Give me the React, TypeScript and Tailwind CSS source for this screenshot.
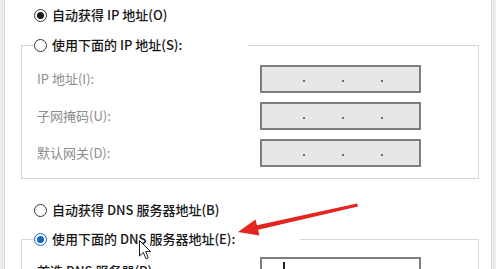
import React from "react";

type RadioProps = { checked?: boolean; blue?: boolean };

function Radio({ checked = false, blue = false }: RadioProps) {
  const ring = blue ? "border-[#1466c8]" : "border-[#333333]";
  const dot = blue ? "bg-[#1466c8]" : "bg-[#1a1a1a]";
  return (
    <span
      className={`flex h-[13px] w-[13px] shrink-0 items-center justify-center rounded-full border bg-white ${ring}`}
    >
      {checked && <span className={`h-[7px] w-[7px] rounded-full ${dot}`} />}
    </span>
  );
}

function RadioLabel({ text, checked, blue }: { text: string } & RadioProps) {
  return (
    <span className="flex h-[18px] items-center gap-[5px] text-[13px] font-medium leading-[18px] text-[#161616]">
      <Radio checked={checked} blue={blue} />
      <span className="whitespace-nowrap">{text}</span>
    </span>
  );
}

function IpField({ active = false, caret = false }: { active?: boolean; caret?: boolean }) {
  return (
    <div
      className={`relative flex h-[28px] w-[161px] items-center gap-[37px] border-2 border-[#7e7e7e] pl-[41px] ${
        active ? "bg-white" : "bg-[#e7e7e7]"
      }`}
    >
      {caret ? (
        <span className="absolute left-[21px] top-[3px] h-[20px] w-[2px] bg-[#222]" />
      ) : (
        <>
          <span className="mt-[4px] h-[2px] w-[2px] bg-[#6e6e6e]" />
          <span className="mt-[4px] h-[2px] w-[2px] bg-[#6e6e6e]" />
          <span className="mt-[4px] h-[2px] w-[2px] bg-[#6e6e6e]" />
        </>
      )}
    </div>
  );
}

function FieldRow({ label, disabled = true, active = false, caret = false }: {
  label: string;
  disabled?: boolean;
  active?: boolean;
  caret?: boolean;
}) {
  return (
    <div className="flex items-center">
      <span
        className={`w-[223px] whitespace-nowrap text-[13px] ${disabled ? "text-[#8d8d8d]" : "font-medium text-[#1b1b1b]"}`}
      >
        {label}
      </span>
      <IpField active={active} caret={caret} />
    </div>
  );
}

function RedArrow() {
  return (
    <svg className="pointer-events-none absolute left-0 top-0" width="496" height="269" viewBox="0 0 496 269">
      <polygon points="357,203.5 358,206.5 257,230 256,225.5" fill="#e3241f" />
      <polygon points="238,232 255.5,219.5 259.5,235.5" fill="#e3241f" />
    </svg>
  );
}

function MouseCursor() {
  return (
    <svg className="pointer-events-none absolute left-[139px] top-[240px]" width="14" height="21" viewBox="0 0 14 21">
      <path
        d="M0.5 0.5 L0.5 16 L4.3 12.4 L7 18.8 L9.3 17.8 L6.7 11.6 L11.5 11.6 Z"
        fill="#ffffff"
        stroke="#1a1a1a"
        strokeWidth="1"
        strokeLinejoin="round"
      />
    </svg>
  );
}

export default function App() {
  return (
    <div
      className="relative flex h-[269px] w-[496px] overflow-hidden bg-white"
      style={{ fontFamily: '"Noto Sans CJK SC", "Noto Sans", sans-serif' }}
    >
      <div className="w-[5px] shrink-0 border-r border-[#d6d6d6] bg-[#ececec]" />

      <div className="flex min-w-0 flex-1 flex-col pt-[6px]">
        <div className="pl-[29px]">
          <RadioLabel text="自动获得 IP 地址(O)" checked />
        </div>

        <fieldset className="ml-[16px] mr-[12px] mt-[12px] border border-[#d8d8d8] pb-[11px]">
          <legend className="ml-[12px] pr-[66px]">
            <RadioLabel text="使用下面的 IP 地址(S):" />
          </legend>
          <div className="flex flex-col gap-[9px] pl-[15px] pt-[11px]">
            <FieldRow label="IP 地址(I):" />
            <FieldRow label="子网掩码(U):" />
            <FieldRow label="默认网关(D):" />
          </div>
        </fieldset>

        <div className="mt-[22px] pl-[29px]">
          <RadioLabel text="自动获得 DNS 服务器地址(B)" />
        </div>

        <fieldset className="ml-[16px] mr-[12px] mt-[11px] border border-[#d8d8d8] pb-[11px]">
          <legend className="ml-[12px] pr-[65px]">
            <RadioLabel text="使用下面的 DNS 服务器地址(E):" checked blue />
          </legend>
          <div className="flex flex-col gap-[9px] pl-[15px] pt-[9px]">
            <FieldRow label="首选 DNS 服务器(P):" disabled={false} active caret />
          </div>
        </fieldset>
      </div>

      <div className="w-[5px] shrink-0 border-l border-[#d6d6d6] bg-[#ececec]" />

      <RedArrow />
      <MouseCursor />
    </div>
  );
}
